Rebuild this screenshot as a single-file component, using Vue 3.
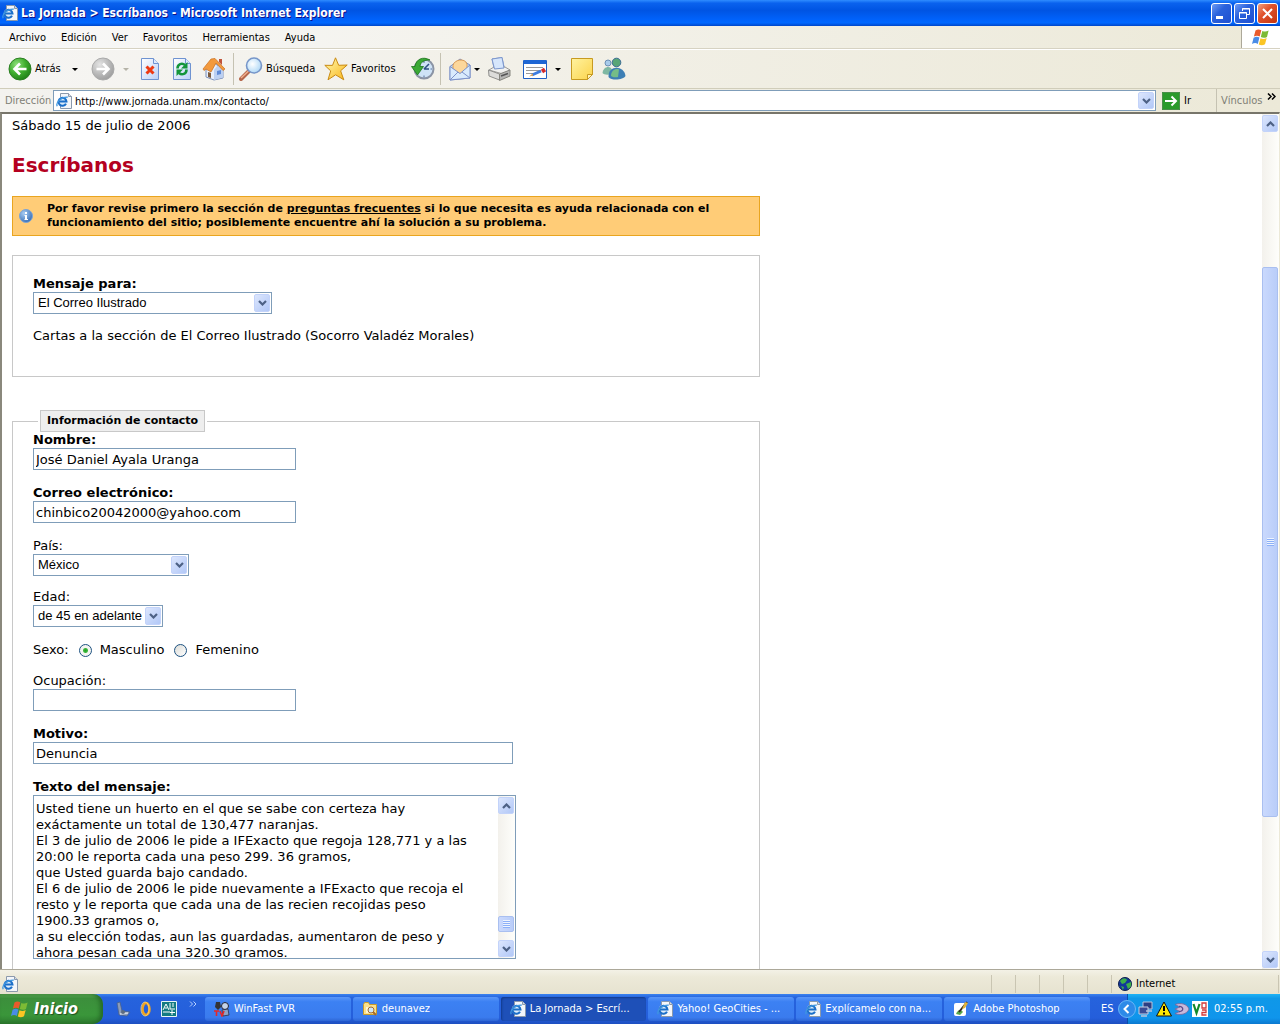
<template>
  <div class="screen">
    <!-- shared icons and gradients -->
    <svg class="defs" width="0" height="0" aria-hidden="true">
      <defs>
        <radialGradient id="gGreen" cx="0.35" cy="0.3" r="0.8">
          <stop offset="0" stop-color="#8fe07c" /><stop offset="0.5" stop-color="#3fae2e" /><stop offset="1" stop-color="#1b7a14" />
        </radialGradient>
        <radialGradient id="gGray" cx="0.35" cy="0.3" r="0.8">
          <stop offset="0" stop-color="#e4e4e4" /><stop offset="0.6" stop-color="#b5b5b5" /><stop offset="1" stop-color="#999" />
        </radialGradient>
        <linearGradient id="gPage" x1="0" y1="0" x2="1" y2="1">
          <stop offset="0" stop-color="#fff" /><stop offset="1" stop-color="#b9d0f7" />
        </linearGradient>
        <radialGradient id="gLens" cx="0.4" cy="0.4" r="0.7">
          <stop offset="0" stop-color="#fff" /><stop offset="1" stop-color="#a5d3f5" />
        </radialGradient>
        <linearGradient id="gNote" x1="0" y1="0" x2="1" y2="1">
          <stop offset="0" stop-color="#fff3a0" /><stop offset="1" stop-color="#fbd34b" />
        </linearGradient>
        <linearGradient id="gStar" x1="0" y1="0" x2="1" y2="1">
          <stop offset="0" stop-color="#fffbb0" /><stop offset="1" stop-color="#f9b418" />
        </linearGradient>
        <radialGradient id="gInfo" cx="0.35" cy="0.3" r="0.8">
          <stop offset="0" stop-color="#a9cdf3" /><stop offset="1" stop-color="#2b64b0" />
        </radialGradient>
      </defs>
      <symbol id="ie" viewBox="0 0 16 16">
        <path d="M4.500.5h8l3 3v12h-11z" fill="#f4f6fa" stroke="#8b99ac" />
        <path d="M12.500.5v3h3" fill="#d5dce6" stroke="#8b99ac" />
        <circle cx="6.500" cy="8.500" r="4.800" fill="#dcecfb" />
        <path d="M10 10.800a4 4 0 1 1 .5-2.300H3" fill="none" stroke="#1c6fc9" stroke-width="2" />
        <path d="M1.200 13.200C-.5 9.500 5 3.800 11.800 4.200" fill="none" stroke="#3f97e0" stroke-width="1.300" />
      </symbol>
      <symbol id="flag" viewBox="0 0 20 18">
        <path d="M4.500 2.500c2-1.500 4-1.300 5.800-.2L8.700 8.500C6.800 7.400 5 7.400 2.900 8.600z" fill="#ea5b2b" />
        <path d="M11.300 2.900c2 1 4 1 6.300-.3L16 8.900c-2.200 1.200-4.300 1.200-6.200.1z" fill="#7dbb35" />
        <path d="M2.600 9.700c2-1.200 4-1.200 5.800-.1l-1.600 6.300C5 14.800 3 14.800 1 16z" fill="#4a8ce6" />
        <path d="M9.500 10.200c2 1 4 1 6.200-.2L14 16.300c-2.200 1.200-4.300 1.200-6.200.1z" fill="#fbc524" />
      </symbol>
      <symbol id="chevDown" viewBox="0 0 9 6">
        <path d="M1 1l3.500 3.500L8 1" fill="none" stroke="#4d6185" stroke-width="2.200" />
      </symbol>
      <symbol id="chevUp" viewBox="0 0 9 6">
        <path d="M1 5l3.500-3.500L8 5" fill="none" stroke="#4d6185" stroke-width="2.200" />
      </symbol>
    </svg>

    <header class="titlebar">
      <svg width="16" height="16"><use href="#ie" /></svg>
      <span class="title">La Jornada &gt; Escríbanos - Microsoft Internet Explorer</span>
      <div class="controls">
        <button aria-label="Minimizar"><svg width="19" height="19"><path d="M4 12h7v3H4z" fill="#fff" /></svg></button>
        <button aria-label="Restaurar">
          <svg width="19" height="19" fill="none" stroke="#fff"><path d="M7.500 7V4.500h7v6H12M7 5h8M4.500 8.500h7v6h-7zM4 9h8" /></svg>
        </button>
        <button class="close" aria-label="Cerrar"><svg width="19" height="19"><path d="M5 5l9 9M14 5l-9 9" stroke="#fff" stroke-width="2" /></svg></button>
      </div>
    </header>

    <nav class="menubar">
      <button v-for="item in menus" :key="item">{{ item }}</button>
      <div class="throbber"><svg width="20" height="18"><use href="#flag" /></svg></div>
    </nav>

    <div class="toolbar">
      <button class="labelled">
        <svg width="24" height="24">
          <circle cx="12" cy="12" r="11" fill="url(#gGreen)" stroke="#2b7f22" />
          <path d="M18.500 12H7M12 6.500L6.500 12l5.500 5.500" fill="none" stroke="#fff" stroke-width="2.600" />
        </svg>
        Atrás
      </button>
      <button aria-label="Páginas anteriores"><svg width="6" height="3"><path d="M0 0h6L3 3z" /></svg></button>
      <button aria-label="Adelante">
        <svg width="24" height="24">
          <circle cx="12" cy="12" r="11" fill="url(#gGray)" stroke="#aaa" />
          <path d="M5.500 12H17M12 6.500l5.500 5.500-5.500 5.500" fill="none" stroke="#fff" stroke-width="2.600" />
        </svg>
      </button>
      <button aria-label="Páginas siguientes"><svg width="6" height="3"><path d="M0 0h6L3 3z" fill="#b5b3a8" /></svg></button>
      <button aria-label="Detener">
        <svg width="24" height="24">
          <path d="M3.500 1.500h12l5 5v16h-17z" fill="url(#gPage)" stroke="#6f93d1" />
          <path d="M15.500 1.500v5h5" fill="#dfeafd" stroke="#6f93d1" />
          <path d="M8.500 9.500l7 7M15.500 9.500l-7 7" stroke="#ee3a12" stroke-width="3" />
        </svg>
      </button>
      <button aria-label="Actualizar">
        <svg width="24" height="24">
          <path d="M3.500 1.500h12l5 5v16h-17z" fill="url(#gPage)" stroke="#6f93d1" />
          <path d="M15.500 1.500v5h5" fill="#dfeafd" stroke="#6f93d1" />
          <path d="M7.500 11.500c0-4.500 4.500-6 7.500-3.500M16.500 12.500c0 4.500-4.500 6-7.500 3.500" fill="none" stroke="#13953a" stroke-width="2.600" />
          <path d="M17.500 5v6.500H11zM6.500 19v-6.500H13z" fill="#13953a" />
        </svg>
      </button>
      <button aria-label="Inicio">
        <svg width="24" height="24">
          <path d="M17 2h3v6l-3-3z" fill="#c0533a" />
          <path d="M4 12l6-8 11 9v8l-9 2-8-3z" fill="#e8effb" stroke="#7d92bb" />
          <path d="M12 13v10l9-2.500V12l-5-4z" fill="#bcd0f2" />
          <path d="M1 12L9 2l4-.5L23 12l-2 1.500L14 6l-5 9-5-3-2 1.500z" fill="#f39a3d" stroke="#c96f1c" stroke-width=".7" />
          <path d="M6 15l3 1v5l-3-1z" fill="#7c5b3f" />
          <path d="M15 14l4-1v4l-4 1z" fill="#5f8bd8" />
        </svg>
      </button>
      <i class="sep"></i>
      <button class="labelled">
        <svg width="24" height="24">
          <path d="M10 14l-8 8" stroke="#b5664b" stroke-width="4" stroke-linecap="round" />
          <path d="M9.500 14l-7.500 7" stroke="#f0b08e" stroke-width="1.400" />
          <circle cx="15" cy="8.500" r="7.500" fill="url(#gLens)" stroke="#7796c9" stroke-width="1.600" />
        </svg>
        Búsqueda
      </button>
      <button class="labelled">
        <svg width="24" height="24">
          <path d="M11.500.8l3.200 7.500 8.500-.3-6.600 5.800 3.200 9-8.200-5L4 22.800l2.700-8.900L.8 8.300l7.700.1z" fill="url(#gStar)" stroke="#c98a12" />
        </svg>
        Favoritos
      </button>
      <button aria-label="Historial">
        <svg width="24" height="24">
          <circle cx="13" cy="12" r="9.500" fill="#cfe3f7" stroke="#8b94a5" stroke-width="2" />
          <path d="M13 12l5-5M13 12h5" stroke="#2d4f83" stroke-width="1.500" />
          <path d="M13 4v2M13 18.500v2M19.500 12H21" stroke="#58709a" />
          <path d="M19 3C12-1 5 2 4 9.500H.5L6.500 18l6-8.500H9C9.500 5 13 2.800 19 3z" fill="#3ba935" stroke="#1c751c" stroke-width=".8" />
        </svg>
      </button>
      <i class="sep"></i>
      <button aria-label="Correo">
        <svg width="24" height="24">
          <path d="M2 9.500L12 2l10 6v13L2 23z" fill="#b9d7f8" stroke="#7c92c9" />
          <path d="M5 8.500c1-6 12-8 14-1.500v5l-7 5-7-4z" fill="#fcd79b" stroke="#dd9c53" />
          <path d="M2 9.500l10 7L22 8v13L2 23z" fill="#d9ebfd" stroke="#7c92c9" />
          <path d="M2 23l8-8M22 21l-8-6" stroke="#7c92c9" />
        </svg>
      </button>
      <button aria-label="Opciones de correo"><svg width="6" height="3"><path d="M0 0h6L3 3z" /></svg></button>
      <button aria-label="Imprimir">
        <svg width="24" height="24">
          <path d="M5 2l10-1.500L17.500 12l-10 1z" fill="#d6e6fc" stroke="#7d97cc" />
          <path d="M2 13l5-3h11l5 3-7 4z" fill="#f2f2f0" stroke="#9a9a98" />
          <path d="M5 2l10-1.500L17 11l-9.500 1z" fill="#d6e6fc" stroke="#7d97cc" />
          <path d="M1.500 13l11 4v6L2 19z" fill="#dcdcda" stroke="#8f8f8d" />
          <path d="M12.500 17L23 13v6l-10.500 4.500z" fill="#b5b5b3" stroke="#85857f" />
          <path d="M14 19l7-2.500" stroke="#555" stroke-width="1.500" />
        </svg>
      </button>
      <button aria-label="Modificar">
        <svg width="24" height="24">
          <path d="M.5 3.500h23v18H.5z" fill="#fff" stroke="#1f5fc4" />
          <path d="M1 3h22v4H1z" fill="#1e66d4" />
          <path d="M3 10.500h17M3 13.500h15M3 16.500h8" stroke="#999" />
          <path d="M9 18l9-4" stroke="#3e7ce0" stroke-width="3" />
          <path d="M19 14.500l3-2" stroke="#d22a2a" stroke-width="4" />
          <path d="M6 19.500l4-3v2z" fill="#e79c3b" />
        </svg>
      </button>
      <button aria-label="Editores"><svg width="6" height="3"><path d="M0 0h6L3 3z" /></svg></button>
      <button aria-label="Discusión">
        <svg width="24" height="24">
          <path d="M1.500 1.500h21v16l-5 5h-16z" fill="url(#gNote)" stroke="#c79a20" />
          <path d="M22.500 17.500h-5v5z" fill="#fff4b8" stroke="#c79a20" />
        </svg>
      </button>
      <button aria-label="Messenger">
        <svg width="24" height="24">
          <circle cx="6" cy="6" r="3" fill="#a9cbea" stroke="#6b8fb5" />
          <path d="M.5 16C1 9 9 8 10 13v4c-4 1-8 1-9.500-1z" fill="#7fb8a2" />
          <circle cx="14.500" cy="5.500" r="4.300" fill="#58a577" stroke="#3b6c94" />
          <path d="M6.500 20C6 8 22 8 23.500 19c-2 4-14 5-17 1z" fill="#3d7fb4" />
          <path d="M9 19c0-6 5-8 8-6.500L16 20c-3 .5-5 .5-7-1z" fill="#75bd87" />
        </svg>
      </button>
    </div>

    <div class="addressbar">
      <label for="url">Dirección</label>
      <div class="url-box">
        <svg width="16" height="16"><use href="#ie" /></svg>
        <input id="url" v-model="url" type="text" />
        <button class="xp-arrow" aria-label="Direcciones"><svg width="9" height="6"><use href="#chevDown" /></svg></button>
      </div>
      <button class="go">
        <svg width="18" height="18">
          <path d="M0 0h18v18H0z" fill="#2b9a2b" /><path d="M.5.5h17v17H.5z" fill="none" stroke="#4a8f4a" />
          <path d="M3 9h11M9.500 4.500L14 9l-4.500 4.500" fill="none" stroke="#fff" stroke-width="2" />
        </svg>
        Ir
      </button>
      <div class="links">
        <span>Vínculos</span>
        <svg width="9" height="7" fill="none" stroke="#000" stroke-width="1.500"><path d="M1 .5l3 3-3 3M5 .5l3 3-3 3" /></svg>
      </div>
    </div>

    <div class="viewport">
      <main class="page">
        <p class="date">Sábado 15 de julio de 2006</p>
        <h1>Escríbanos</h1>

        <div class="notice">
          <svg width="14" height="14">
            <circle cx="7" cy="7" r="6.500" fill="url(#gInfo)" stroke="#7da4d4" />
            <path d="M6 3h2v2H6zM5.500 6H8v4h1v1H5.500v-1H6V7h-.5z" fill="#fff" />
          </svg>
          <p>
            Por favor revise primero la sección de <a href="#">preguntas frecuentes</a> si lo que necesita es ayuda relacionada con el
            funcionamiento del sitio; posiblemente encuentre ahí la solución a su problema.
          </p>
        </div>

        <form @submit.prevent>
          <fieldset class="target">
            <label for="para" class="required">Mensaje para:</label>
            <div class="select wide">
              <select id="para" v-model="form.para"><option>El Correo Ilustrado</option></select>
              <span class="xp-arrow"><svg width="9" height="6"><use href="#chevDown" /></svg></span>
            </div>
            <p>Cartas a la sección de El Correo Ilustrado (Socorro Valadéz Morales)</p>
          </fieldset>

          <fieldset class="contact">
            <legend>Información de contacto</legend>
            <div class="field">
              <label for="nombre" class="required">Nombre:</label>
              <input id="nombre" v-model="form.nombre" type="text" />
            </div>
            <div class="field">
              <label for="correo" class="required">Correo electrónico:</label>
              <input id="correo" v-model="form.correo" type="text" />
            </div>
            <div class="field compact">
              <label for="pais">País:</label>
              <div class="select medium">
                <select id="pais" v-model="form.pais"><option>México</option></select>
                <span class="xp-arrow"><svg width="9" height="6"><use href="#chevDown" /></svg></span>
              </div>
            </div>
            <div class="field">
              <label for="edad">Edad:</label>
              <div class="select small">
                <select id="edad" v-model="form.edad"><option>de 45 en adelante</option></select>
                <span class="xp-arrow"><svg width="9" height="6"><use href="#chevDown" /></svg></span>
              </div>
            </div>
            <div class="field radios">
              <span>Sexo:</span>
              <input id="masc" v-model="form.sexo" type="radio" name="sexo" value="m" />
              <label for="masc">Masculino</label>
              <input id="fem" v-model="form.sexo" type="radio" name="sexo" value="f" />
              <label for="fem">Femenino</label>
            </div>
            <div class="field">
              <label for="ocupacion">Ocupación:</label>
              <input id="ocupacion" v-model="form.ocupacion" type="text" />
            </div>
            <div class="field">
              <label for="motivo" class="required">Motivo:</label>
              <input id="motivo" v-model="form.motivo" class="long" type="text" />
            </div>
            <div class="field">
              <label for="texto" class="required">Texto del mensaje:</label>
              <div class="message">
                <textarea id="texto" v-model="form.texto"></textarea>
                <div class="scrollbar">
                  <button type="button" class="xp-arrow" aria-label="Subir"><svg width="9" height="6"><use href="#chevUp" /></svg></button>
                  <i :style="{ flexGrow: 106 }"></i>
                  <span class="thumb" :style="{ flexGrow: 15 }"><b></b></span>
                  <i :style="{ flexGrow: 8 }"></i>
                  <button type="button" class="xp-arrow" aria-label="Bajar"><svg width="9" height="6"><use href="#chevDown" /></svg></button>
                </div>
              </div>
            </div>
          </fieldset>
        </form>
      </main>
      <div class="scrollbar">
        <button class="xp-arrow" aria-label="Subir página"><svg width="9" height="6"><use href="#chevUp" /></svg></button>
        <i :style="{ flexGrow: 136 }"></i>
        <span class="thumb" :style="{ flexGrow: 550 }"><b></b></span>
        <i :style="{ flexGrow: 135 }"></i>
        <button class="xp-arrow" aria-label="Bajar página"><svg width="9" height="6"><use href="#chevDown" /></svg></button>
      </div>
    </div>

    <div class="statusbar">
      <svg width="16" height="16"><use href="#ie" /></svg>
      <span class="fill"></span>
      <i v-for="n in 5" :key="n"></i>
      <div class="zone">
        <svg width="14" height="14">
          <circle cx="7" cy="7" r="6.500" fill="#12369b" stroke="#0b1d4a" />
          <path d="M2 4c3-4 6-3 7-1L7 6l-3 1zM8 7l5-2c1 4-1 6-3 7zM3 9l3 1-1 3z" fill="#3dae4a" />
        </svg>
        Internet
      </div>
    </div>

    <footer class="taskbar">
      <button class="start"><svg width="20" height="18"><use href="#flag" /></svg>Inicio</button>
      <div class="quick">
        <svg width="16" height="16">
          <path d="M2 2l3-1 2 9 8 1-3 4-8-1z" fill="#8c9cb8" stroke="#46608f" stroke-width=".8" />
          <path d="M5 13l8-1" stroke="#d4dae6" stroke-width="1.500" />
          <circle cx="8" cy="11" r="2" fill="#5d6c80" />
        </svg>
        <svg width="16" height="16">
          <ellipse cx="8" cy="8" rx="3.500" ry="6" fill="none" stroke="#f2a41f" stroke-width="2.500" />
          <ellipse cx="7" cy="8" rx="4" ry="7" fill="none" stroke="#ffe08c" stroke-width=".7" />
        </svg>
        <svg width="16" height="16">
          <path d="M.5.500h15v15H.5z" fill="#137b82" stroke="#e7f6f6" />
          <path d="M2 9l3-6 3 6M3.500 7h3M9 2v6h5M2 11h7M11 9v5M9 11.500h5M12 2v4" fill="none" stroke="#fff" />
        </svg>
        <svg class="more" width="8" height="6" fill="none" stroke="#b9d2ff"><path d="M1 .5l2.500 2.500L1 5.500M4.500.5L7 3 4.500 5.500" /></svg>
      </div>
      <div class="tasks">
        <button v-for="task in tasks" :key="task.name" :class="{ active: task.active }">
          <svg v-if="task.icon === 'ie'" width="16" height="16"><use href="#ie" /></svg>
          <svg v-else-if="task.icon === 'tv'" width="16" height="16">
            <path d="M2 1h4l1 5-3 3-3-3z" fill="#333" /><circle cx="11" cy="5" r="3.500" fill="#c5d3e8" stroke="#223" />
            <path d="M8 9l6-1 1 6-6 1z" fill="#8fa2c4" stroke="#223" stroke-width=".7" />
            <path d="M0 10h5M2.500 10v5M6 10l2 5 2-5" fill="none" stroke="#e52727" stroke-width="1.600" />
          </svg>
          <svg v-else-if="task.icon === 'folder'" width="16" height="16">
            <path d="M1.500 3.500l1-2h4l1 2h7v10h-13z" fill="#fbe08a" stroke="#c89b2c" />
            <path d="M4 6h8l-1 6H4z" fill="#fff6cf" /><circle cx="9" cy="9" r="3" fill="#cde7fa" stroke="#a56b2d" /><path d="M11 11l3 3" stroke="#a56b2d" stroke-width="2" />
          </svg>
          <svg v-else width="16" height="16">
            <rect x="1" y="2" width="12" height="13" rx="2" fill="#fff" />
            <path d="M3 13c2-5 5-5 7-2l-3 3z" fill="#58a64b" /><path d="M6 11L14 1" stroke="#332b22" stroke-width="2" />
            <path d="M12 1l3 1-3 5-3 1z" fill="#e0b33c" />
          </svg>
          <span>{{ task.name }}</span>
        </button>
      </div>
      <span class="lang">ES</span>
      <div class="tray">
        <button class="expand" aria-label="Mostrar iconos ocultos">
          <svg width="18" height="18">
            <circle cx="9" cy="9" r="8.500" fill="#2c8ae8" stroke="#69b6f7" /><path d="M10.500 5L6.500 9l4 4" fill="none" stroke="#fff" stroke-width="2" />
          </svg>
        </button>
        <svg width="16" height="16">
          <path d="M5 1h9v7H5z" fill="#2c3e82" stroke="#b9c4dc" /><path d="M1 6h9v7H1z" fill="#3a4c95" stroke="#c7d0e4" />
          <path d="M3 15h6M8 10h6" stroke="#b9c4dc" stroke-width="1.500" />
        </svg>
        <svg width="16" height="16">
          <path d="M8 1l7.500 14H.5z" fill="#ffe800" stroke="#111" stroke-linejoin="round" /><path d="M8 5v5M8 11.500v2" stroke="#000" stroke-width="2" />
        </svg>
        <svg width="16" height="16">
          <path d="M1 3.500c5-2 12-1 14 4.500-2 5.500-9 6.500-14 4.500l5-2-5-2.500 5-2z" fill="#c9b9da" stroke="#74649a" stroke-width=".8" />
          <path d="M5 5.500c5-.5 5 5.500 0 5" fill="none" stroke="#5c4b88" stroke-width="1.300" />
        </svg>
        <svg width="16" height="16">
          <path d="M0 0h16v16H0z" fill="#fff" /><path d="M1.500 3l3 9 3-9" fill="none" stroke="#128a2d" stroke-width="2.200" />
          <path d="M10 2h4v5h-4zM10 9h4v2.500h-4V14h4.500" fill="none" stroke="#d43b3b" stroke-width="1.300" />
        </svg>
        <time>02:55 p.m.</time>
      </div>
    </footer>
  </div>
</template>

<script setup>
import { ref, reactive } from 'vue'

const url = ref('http://www.jornada.unam.mx/contacto/')

const menus = ['Archivo', 'Edición', 'Ver', 'Favoritos', 'Herramientas', 'Ayuda']

const form = reactive({
  para: 'El Correo Ilustrado',
  nombre: 'José Daniel Ayala Uranga',
  correo: 'chinbico20042000@yahoo.com',
  pais: 'México',
  edad: 'de 45 en adelante',
  sexo: 'm',
  ocupacion: '',
  motivo: 'Denuncia',
  texto: `Usted tiene un huerto en el que se sabe con certeza hay exáctamente un total de 130,477 naranjas.
El 3 de julio de 2006 le pide a IFExacto que regoja 128,771 y a las 20:00 le reporta cada una peso 299. 36 gramos,
que Usted guarda bajo candado.
El 6 de julio de 2006 le pide nuevamente a IFExacto que recoja el resto y le reporta que cada una de las recien recojidas peso 1900.33 gramos o,
a su elección todas, aun las guardadas, aumentaron de peso y ahora pesan cada una 320.30 gramos.`
})

const tasks = [
  { name: 'WinFast PVR', icon: 'tv' },
  { name: 'deunavez', icon: 'folder' },
  { name: 'La Jornada > Escrí...', icon: 'ie', active: true },
  { name: 'Yahoo! GeoCities - ...', icon: 'ie' },
  { name: 'Explícamelo con na...', icon: 'ie' },
  { name: 'Adobe Photoshop', icon: 'ps' }
]
</script>

<style>
body {
  margin: 0;
}
</style>

<style scoped>
.screen {
  height: 100vh;
  display: flex;
  flex-direction: column;
  overflow: hidden;
  background: #ece9d8;
  color: #000;
  font: 11px/14px Tahoma, "DejaVu Sans Condensed", "DejaVu Sans", sans-serif;
}
.screen *, .screen {
  box-sizing: border-box;
}
.defs {
  position: absolute;
}
svg {
  flex: none;
  display: block;
}
button {
  font: inherit;
  color: inherit;
  background: none;
  border: 0;
  padding: 0;
}
p, h1 {
  margin: 0;
}

/* title bar */
.titlebar {
  flex: none;
  height: 26px;
  display: flex;
  align-items: center;
  gap: 3px;
  padding: 0 2px;
  color: #fff;
  background: linear-gradient(#2f8cff 0, #0a62ee 12%, #0054e3 40%, #0062fb 75%, #0068ff 88%, #0046c8 100%);
}
.title {
  flex: 1;
  font: bold 12px/16px "Trebuchet MS", "DejaVu Sans Condensed", sans-serif;
  text-shadow: 1px 1px #0f1089;
  white-space: nowrap;
}
.controls {
  display: flex;
  gap: 2px;
}
.controls button {
  width: 21px;
  height: 21px;
  border: 1px solid #fff;
  border-radius: 3px;
  background: linear-gradient(135deg, #6f9cf5, #2a62dc 40%, #1f4fd0);
}
.controls .close {
  background: linear-gradient(135deg, #f0a080, #e0522c 40%, #c5350f);
}

/* menu bar */
.menubar {
  flex: none;
  height: 23px;
  display: flex;
  align-items: center;
  gap: 15px;
  padding-left: 9px;
  background: linear-gradient(90deg, #f8f8f8, #ece9d8);
  border-bottom: 1px solid #d6d2c2;
}
.menubar button {
  padding-top: 2px;
}
.throbber {
  align-self: stretch;
  width: 39px;
  margin-left: auto;
  display: flex;
  align-items: center;
  justify-content: center;
  background: #fff;
  border-left: 1px solid #aca899;
}

/* toolbar */
.toolbar {
  flex: none;
  height: 40px;
  display: grid;
  grid-template-columns: 58px 18px 38px 8px 40px 24px 39px 6px 85px 82px 34px 6px 28px 6px 38px 34px 12px 36px 28px;
  padding-left: 8px;
  background: linear-gradient(90deg, #f6f5f3, #ece9d8);
  border-top: 1px solid #fff;
  border-bottom: 1px solid #d0cdba;
}
.toolbar button {
  display: flex;
  align-items: center;
  justify-content: center;
}
.toolbar .labelled {
  justify-content: flex-start;
  gap: 3px;
}
.sep {
  margin: 3px 0;
  border-left: 1px solid #c5c2b2;
}

/* address bar */
.addressbar {
  flex: none;
  height: 23px;
  display: flex;
  align-items: center;
  padding-left: 5px;
  background: linear-gradient(90deg, #f3f2ee, #ece9d8);
}
.addressbar label {
  width: 48px;
  color: #808076;
}
.url-box {
  flex: 1;
  height: 21px;
  display: flex;
  align-items: center;
  padding: 0 1px 0 2px;
  background: #fff;
  border: 1px solid #7f9db9;
}
.url-box input {
  flex: 1;
  min-width: 0;
  border: 0;
  outline: 0;
  padding: 2px 3px 0;
  background: none;
  font: inherit;
}
.go {
  width: 60px;
  display: flex;
  align-items: center;
  gap: 4px;
  padding-left: 6px;
}
.links {
  align-self: stretch;
  display: flex;
  justify-content: space-between;
  align-items: center;
  width: 64px;
  padding: 0 4px;
  border-left: 1px solid #c5c2b2;
  color: #808076;
}
.links svg {
  margin-bottom: 8px;
}
.xp-arrow {
  width: 16px;
  height: 17px;
  flex: none;
  display: flex;
  align-items: center;
  justify-content: center;
  background: linear-gradient(135deg, #dce6fd, #b2c8f7);
  border: 1px solid #c3d3fa;
  border-radius: 2px;
}

/* page */
.viewport {
  flex: 1;
  min-height: 0;
  display: flex;
  background: #fff;
  border-top: 2px solid #77756a;
  border-left: 2px solid #8a887c;
  border-right: 1px solid #ece9d8;
}
.page {
  flex: 1;
  min-width: 0;
  overflow: hidden;
  padding: 4px 10px 0;
  font: 13px/16px Verdana, "DejaVu Sans", sans-serif;
}
h1 {
  margin-top: 17px;
  font-size: 20px;
  line-height: 28px;
  color: #b40020;
}
.notice, fieldset {
  max-width: 748px;
}
.notice {
  height: 40px;
  margin-top: 17px;
  display: flex;
  align-items: center;
  gap: 14px;
  padding: 0 6px;
  background: #ffcc77;
  border: 1px solid #e9a520;
  font-weight: bold;
  font-size: 11px;
  line-height: 14px;
}
.notice p {
  flex: 1;
}
.notice a {
  color: #000;
}
fieldset {
  min-width: 0;
  margin: 0;
  border: 1px solid #c8c8c8;
}
.target {
  margin-top: 19px;
  padding: 20px 20px 32px;
}
.target p {
  margin-top: 14px;
}
.contact {
  margin-top: 33px;
  padding: 0 20px;
}
legend {
  margin-left: 7px;
  padding: 3px 6px;
  border: 1px solid #c8c8c8;
  outline: 2px solid #fff;
  background: #eee;
  font-size: 11px;
  font-weight: bold;
  line-height: 14px;
}
label {
  display: block;
}
.required {
  font-weight: bold;
}
.field {
  margin-bottom: 15px;
}
.field.compact {
  margin-bottom: 13px;
}
.field > input[type="text"] {
  display: block;
  width: 263px;
  height: 22px;
  padding: 1px 2px;
  border: 1px solid #7f9db9;
  outline: 0;
  background: #fff;
  font: inherit;
}
.field > input.long {
  width: 480px;
}
.select {
  display: grid;
  height: 22px;
}
.wide {
  width: 239px;
}
.medium {
  width: 156px;
}
.small {
  width: 130px;
}
.select > * {
  grid-area: 1 / 1;
}
.select select {
  appearance: none;
  height: 22px;
  padding: 0 4px;
  border: 1px solid #7f9db9;
  border-radius: 0;
  background: #fff;
  color: #000;
  font: 13px/16px "Liberation Sans", Arial, sans-serif;
}
.select .xp-arrow {
  justify-self: end;
  align-self: center;
  margin-right: 2px;
  height: 18px;
  pointer-events: none;
}
.radios {
  display: flex;
  align-items: center;
}
.radios input {
  appearance: none;
  width: 13px;
  height: 13px;
  margin: 0 8px 0 10px;
  border: 1px solid #1d5281;
  border-radius: 50%;
  background: linear-gradient(135deg, #dcdcd7, #fff);
}
.radios input:checked {
  background: radial-gradient(#21a121 0, #3fb83f 2px, #f4f4f0 3px);
}
.message {
  width: 483px;
  height: 164px;
  display: flex;
  border: 1px solid #7f9db9;
}
textarea {
  flex: 1;
  min-width: 0;
  padding: 5px 20px 0 2px;
  border: 0;
  outline: 0;
  resize: none;
  overflow: hidden;
  background: #fff;
  font: inherit;
}

/* scrollbars */
.scrollbar {
  flex: none;
  width: 17px;
  display: flex;
  flex-direction: column;
  padding: 1px 0;
  background: linear-gradient(90deg, #f3f1ec, #fefefb);
}
.scrollbar > i, .thumb {
  flex-basis: 0;
}
.thumb {
  width: 16px;
  display: flex;
  align-items: center;
  justify-content: center;
  border: 1px solid #a9bff0;
  border-radius: 2px;
  background: linear-gradient(90deg, #cad9fd, #b9cdf9);
}
.thumb b {
  width: 7px;
  height: 8px;
  background: repeating-linear-gradient(#eef4fe 0 1px, #8cb0f8 1px 2px);
}

/* status bar */
.statusbar {
  flex: none;
  height: 25px;
  display: flex;
  align-items: center;
  padding: 3px 1px 0 2px;
  border-top: 1px solid #aca899;
  background: linear-gradient(#f3f1e6, #ece9d8 30%, #e6e2d0);
}
.fill {
  flex: 1;
}
.statusbar i {
  width: 24px;
  height: 18px;
  border-left: 1px solid #c9c5b2;
}
.zone {
  width: 168px;
  height: 18px;
  display: flex;
  align-items: center;
  gap: 4px;
  padding-left: 6px;
  border-left: 1px solid #c9c5b2;
  border-right: 1px solid #c9c5b2;
}

/* taskbar */
.taskbar {
  flex: none;
  height: 30px;
  display: flex;
  align-items: center;
  color: #fff;
  background: linear-gradient(#3b83ef 0, #2663dd 12%, #245edb 80%, #1d4fc0 100%);
}
.start {
  width: 103px;
  height: 30px;
  display: flex;
  align-items: center;
  gap: 4px;
  padding-left: 10px;
  border-radius: 0 10px 10px 0;
  background: linear-gradient(#5eac56 0, #3c8f3c 15%, #3a963a 70%, #2d7a2f 100%);
  box-shadow: inset -3px 0 4px #266b27;
  font: italic bold 16px/20px "Franklin Gothic Medium", "DejaVu Sans Condensed", sans-serif;
  text-shadow: 1px 1px 1px #1f4f1f;
}
.quick {
  width: 102px;
  display: flex;
  align-items: center;
  gap: 7px;
  padding-left: 12px;
}
.quick .more {
  margin: 0 0 10px 5px;
}
.tasks {
  flex: 1;
  min-width: 0;
  display: grid;
  grid-template-columns: repeat(6, 1fr);
  gap: 2px;
}
.tasks button {
  min-width: 0;
  height: 24px;
  display: flex;
  align-items: center;
  gap: 4px;
  padding: 0 4px 0 9px;
  border-radius: 3px;
  background: linear-gradient(#5a96f8, #3c81f3 20%, #3a7bee 85%, #2e66d4);
}
.tasks button.active {
  background: #1e50b8;
  box-shadow: inset 1px 1px 2px #123a8c;
}
.tasks span {
  overflow: hidden;
  white-space: nowrap;
}
.lang {
  width: 37px;
  padding-left: 11px;
}
.tray {
  width: 153px;
  height: 30px;
  display: flex;
  align-items: center;
  gap: 2px;
  border-left: 1px solid #0a4fa8;
  background: linear-gradient(#1fb3f5 0, #0f98e8 15%, #0f95ec 80%, #0b78cf 100%);
}
.tray .expand {
  margin-left: -10px;
}
.tray time {
  margin-left: 4px;
  white-space: nowrap;
}
</style>
